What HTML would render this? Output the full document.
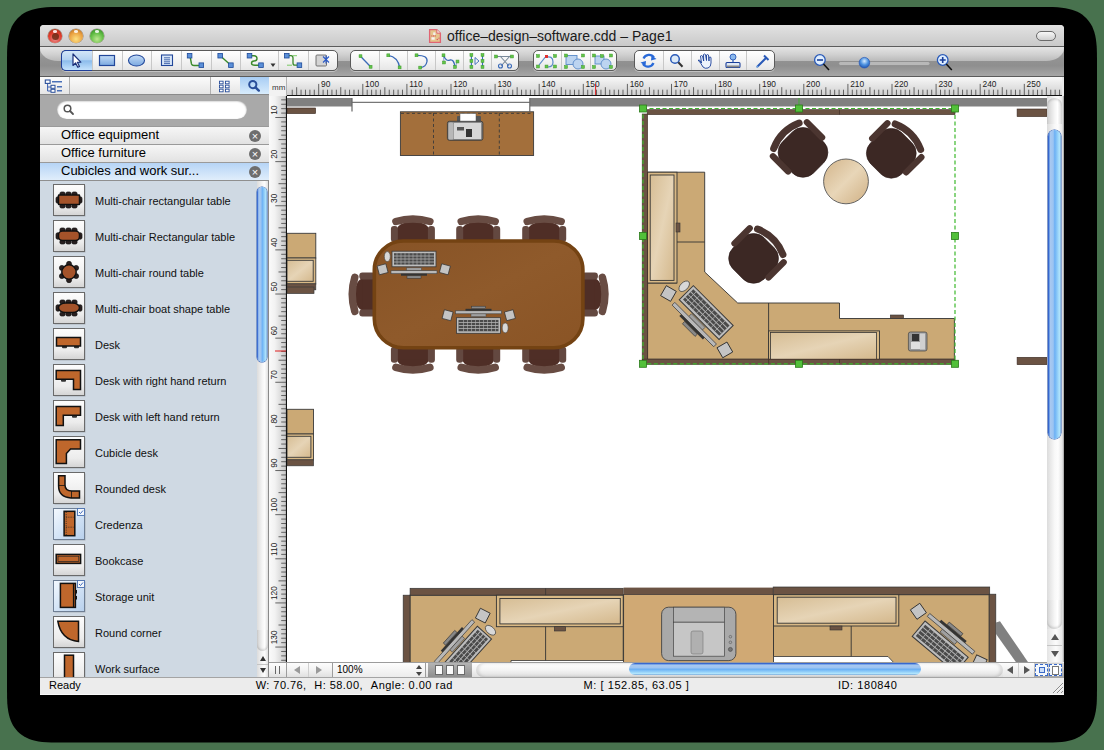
<!DOCTYPE html>
<html><head><meta charset="utf-8">
<style>
*{margin:0;padding:0;box-sizing:border-box}
html,body{width:1104px;height:750px;overflow:hidden;background:#48724e;font-family:"Liberation Sans",sans-serif;position:relative}
div,span,svg{position:absolute}
.t{white-space:nowrap;color:#000}
</style></head><body>

<svg style="left:0;top:0" width="1104" height="750"><path d="M1044.0,7.0 L1052.6,7.1 L1057.6,7.3 L1061.8,7.7 L1065.5,8.2 L1068.9,8.9 L1071.9,9.7 L1074.8,10.7 L1077.4,11.8 L1079.8,13.1 L1082.1,14.6 L1084.1,16.2 L1086.1,17.9 L1087.8,19.9 L1089.4,21.9 L1090.9,24.2 L1092.2,26.6 L1093.3,29.2 L1094.3,32.1 L1095.1,35.1 L1095.8,38.5 L1096.3,42.2 L1096.7,46.4 L1096.9,51.4 L1097.0,60.0 L1097.0,689.6 L1096.9,698.2 L1096.7,703.2 L1096.3,707.4 L1095.8,711.1 L1095.1,714.5 L1094.3,717.5 L1093.3,720.4 L1092.2,723.0 L1090.9,725.4 L1089.4,727.7 L1087.8,729.7 L1086.1,731.7 L1084.1,733.4 L1082.1,735.0 L1079.8,736.5 L1077.4,737.8 L1074.8,738.9 L1071.9,739.9 L1068.9,740.7 L1065.5,741.4 L1061.8,741.9 L1057.6,742.3 L1052.6,742.5 L1044.0,742.6 L60.0,742.6 L51.4,742.5 L46.4,742.3 L42.2,741.9 L38.5,741.4 L35.1,740.7 L32.1,739.9 L29.2,738.9 L26.6,737.8 L24.2,736.5 L21.9,735.0 L19.9,733.4 L17.9,731.7 L16.2,729.7 L14.6,727.7 L13.1,725.4 L11.8,723.0 L10.7,720.4 L9.7,717.5 L8.9,714.5 L8.2,711.1 L7.7,707.4 L7.3,703.2 L7.1,698.2 L7.0,689.6 L7.0,60.0 L7.1,51.4 L7.3,46.4 L7.7,42.2 L8.2,38.5 L8.9,35.1 L9.7,32.1 L10.7,29.2 L11.8,26.6 L13.1,24.2 L14.6,21.9 L16.2,19.9 L17.9,17.9 L19.9,16.2 L21.9,14.6 L24.2,13.1 L26.6,11.8 L29.2,10.7 L32.1,9.7 L35.1,8.9 L38.5,8.2 L42.2,7.7 L46.4,7.3 L51.4,7.1 L60.0,7.0Z" fill="#000"/></svg>
<div style="left:40px;top:25px;width:1024px;height:669px;background:#e9e9e9;border-radius:4px 4px 0 0;overflow:hidden"></div>
<div style="left:40px;top:25px;width:1024px;height:21px;background:linear-gradient(#e2e2e2,#c9c9c9);border-radius:4px 4px 0 0"></div>
<div style="left:40px;top:46px;width:1024px;height:1px;background:#5c5c5c"></div>
<div style="left:48px;top:29px;width:14px;height:14px;border-radius:50%;background:radial-gradient(circle at 50% 72%,#e89090 0%,#e03828 55%,#8a3a18 100%);box-shadow:0 0 0 0.6px rgba(60,40,20,.45), 0 1px 1px rgba(255,255,255,.5)"></div>
<div style="left:53px;top:30px;width:4px;height:2.5px;border-radius:50%;background:rgba(255,255,255,.85)"></div>
<div style="left:69px;top:29px;width:14px;height:14px;border-radius:50%;background:radial-gradient(circle at 50% 72%,#fce080 0%,#eaa040 55%,#a8601a 100%);box-shadow:0 0 0 0.6px rgba(60,40,20,.45), 0 1px 1px rgba(255,255,255,.5)"></div>
<div style="left:74px;top:30px;width:4px;height:2.5px;border-radius:50%;background:rgba(255,255,255,.85)"></div>
<div style="left:90px;top:29px;width:14px;height:14px;border-radius:50%;background:radial-gradient(circle at 50% 72%,#bce890 0%,#5cba40 55%,#2a7a22 100%);box-shadow:0 0 0 0.6px rgba(60,40,20,.45), 0 1px 1px rgba(255,255,255,.5)"></div>
<div style="left:95px;top:30px;width:4px;height:2.5px;border-radius:50%;background:rgba(255,255,255,.85)"></div>
<div style="left:51.5px;top:32.5px;width:7px;height:7px;border-radius:50%;background:#6e2a14;opacity:.85"></div>
<svg style="left:428px;top:28px" width="16" height="16"><path d="M1.6,1.6 H8.8 L12.4,5.2 V14.4 H1.6 Z" fill="#e4c48c" stroke="#e06472" stroke-width="1.3"/><path d="M8.8,1.6 V5.2 H12.4" fill="#f0e8d8" stroke="#e06472" stroke-width="1"/><rect x="5.2" y="4.4" width="2.2" height="2.6" fill="#f4f0f0"/><rect x="3.5" y="9.3" width="3.2" height="2.4" fill="#f8f4f4"/><circle cx="3.8" cy="7.9" r=".6" fill="#e05060"/><circle cx="5.5" cy="7.9" r=".6" fill="#e05060"/><circle cx="7.3" cy="7.9" r=".6" fill="#e05060"/><circle cx="9.3" cy="11.5" r=".7" fill="#e05060"/><circle cx="11" cy="10.2" r=".6" fill="#e05060"/></svg>
<div class="t" style="left:447px;top:28px;font-size:14px;line-height:17px;letter-spacing:0px;color:#1a1a1a">office&#8211;design&#8211;software.cdd &#8211; Page1</div>
<div style="left:1036px;top:31px;width:20px;height:10px;border-radius:5px;background:linear-gradient(#f8f8f8,#d0d0d0);border:1px solid #6a6a6a"></div>
<div style="left:40px;top:47px;width:1024px;height:29px;background:linear-gradient(#b4b4b4 0%,#939393 40%,#8f8f8f 65%,#a6a6a6 100%)"></div>
<div style="left:40px;top:47px;width:1024px;height:14px;border-radius:0 0 18px 18px / 0 0 13px 13px;background:linear-gradient(#e4e4e4,#d2d2d2 50%,#bababa)"></div>
<div style="left:40px;top:76px;width:1024px;height:1px;background:#5a5a5a"></div>
<div style="left:61px;top:50px;width:277px;height:21px;border-radius:5px;background:linear-gradient(#ffffff 0%,#f4f4f4 50%,#e6e6e6 100%);border:1px solid #5a5a5a;box-shadow:0 1px 0 rgba(255,255,255,.4)"></div>
<div style="left:92px;top:51px;width:1px;height:19px;background:#c8c8c8"></div>
<div style="left:122px;top:51px;width:1px;height:19px;background:#c8c8c8"></div>
<div style="left:151px;top:51px;width:1px;height:19px;background:#c8c8c8"></div>
<div style="left:181px;top:51px;width:1px;height:19px;background:#c8c8c8"></div>
<div style="left:211px;top:51px;width:1px;height:19px;background:#c8c8c8"></div>
<div style="left:240px;top:51px;width:1px;height:19px;background:#c8c8c8"></div>
<div style="left:278px;top:51px;width:1px;height:19px;background:#c8c8c8"></div>
<div style="left:308px;top:51px;width:1px;height:19px;background:#c8c8c8"></div>
<div style="left:61px;top:50px;width:31px;height:21px;border-radius:5px 0 0 5px;background:linear-gradient(#d4e6f8,#b4d2f2 45%,#8cbcec 52%,#c4e2fc);border:1px solid #1f3f9a;border-right:none"></div>
<div style="left:350px;top:50px;width:169px;height:21px;border-radius:5px;background:linear-gradient(#ffffff 0%,#f4f4f4 50%,#e6e6e6 100%);border:1px solid #5a5a5a;box-shadow:0 1px 0 rgba(255,255,255,.4)"></div>
<div style="left:379px;top:51px;width:1px;height:19px;background:#c8c8c8"></div>
<div style="left:407px;top:51px;width:1px;height:19px;background:#c8c8c8"></div>
<div style="left:435px;top:51px;width:1px;height:19px;background:#c8c8c8"></div>
<div style="left:463px;top:51px;width:1px;height:19px;background:#c8c8c8"></div>
<div style="left:491px;top:51px;width:1px;height:19px;background:#c8c8c8"></div>
<div style="left:533px;top:50px;width:84px;height:21px;border-radius:5px;background:linear-gradient(#ffffff 0%,#f4f4f4 50%,#e6e6e6 100%);border:1px solid #5a5a5a;box-shadow:0 1px 0 rgba(255,255,255,.4)"></div>
<div style="left:561px;top:51px;width:1px;height:19px;background:#c8c8c8"></div>
<div style="left:590px;top:51px;width:1px;height:19px;background:#c8c8c8"></div>
<div style="left:634px;top:50px;width:141px;height:21px;border-radius:5px;background:linear-gradient(#ffffff 0%,#f4f4f4 50%,#e6e6e6 100%);border:1px solid #5a5a5a;box-shadow:0 1px 0 rgba(255,255,255,.4)"></div>
<div style="left:663px;top:51px;width:1px;height:19px;background:#c8c8c8"></div>
<div style="left:691px;top:51px;width:1px;height:19px;background:#c8c8c8"></div>
<div style="left:719px;top:51px;width:1px;height:19px;background:#c8c8c8"></div>
<div style="left:746px;top:51px;width:1px;height:19px;background:#c8c8c8"></div>
<div style="left:40px;top:77px;width:229px;height:18px;background:linear-gradient(#fbfbfb,#e4e4e4)"></div>
<div style="left:69px;top:77px;width:1px;height:17px;background:#b0b0b0"></div>
<div style="left:210px;top:77px;width:1px;height:17px;background:#b0b0b0"></div>
<div style="left:240px;top:77px;width:29px;height:17px;background:linear-gradient(#a8cdf4,#d8ecfc)"></div>
<div style="left:40px;top:94px;width:229px;height:1px;background:#8a8a8a"></div>
<div style="left:40px;top:95px;width:229px;height:31px;background:#a9a9a9"></div>
<div style="left:57px;top:100px;width:190px;height:19px;border-radius:10px;background:#fff;box-shadow:inset 0 1px 2px rgba(0,0,0,.45)"></div>
<div style="left:40px;top:126px;width:229px;height:18px;background:linear-gradient(#f6f6f6,#e2e2e2);border-top:1px solid #9a9a9a"></div>
<div class="t" style="left:61px;top:127px;font-size:13px;line-height:16px">Office equipment</div>
<div style="left:249px;top:130px;width:12px;height:12px;border-radius:50%;background:#6e6e6e;color:#fff;font-size:11px;line-height:12px;text-align:center">&#215;</div>
<div style="left:40px;top:144px;width:229px;height:18px;background:linear-gradient(#f6f6f6,#e2e2e2);border-top:1px solid #9a9a9a"></div>
<div class="t" style="left:61px;top:145px;font-size:13px;line-height:16px">Office furniture</div>
<div style="left:249px;top:148px;width:12px;height:12px;border-radius:50%;background:#6e6e6e;color:#fff;font-size:11px;line-height:12px;text-align:center">&#215;</div>
<div style="left:40px;top:162px;width:229px;height:18px;background:linear-gradient(#b6d4f6,#e0eefb);border-top:1px solid #9a9a9a"></div>
<div class="t" style="left:61px;top:163px;font-size:13px;line-height:16px">Cubicles and work sur...</div>
<div style="left:249px;top:166px;width:12px;height:12px;border-radius:50%;background:#6e6e6e;color:#fff;font-size:11px;line-height:12px;text-align:center">&#215;</div>
<div style="left:40px;top:180px;width:229px;height:1px;background:#8f8f8f"></div>
<div style="left:40px;top:181px;width:217px;height:496px;background:#cfd9e3"></div>
<div class="t" style="left:95px;top:194px;font-size:11px;line-height:14px;color:#101010">Multi-chair rectangular table</div>
<div class="t" style="left:95px;top:230px;font-size:11px;line-height:14px;color:#101010">Multi-chair Rectangular table</div>
<div class="t" style="left:95px;top:266px;font-size:11px;line-height:14px;color:#101010">Multi-chair round table</div>
<div class="t" style="left:95px;top:302px;font-size:11px;line-height:14px;color:#101010">Multi-chair boat shape table</div>
<div class="t" style="left:95px;top:338px;font-size:11px;line-height:14px;color:#101010">Desk</div>
<div class="t" style="left:95px;top:374px;font-size:11px;line-height:14px;color:#101010">Desk with right hand return</div>
<div class="t" style="left:95px;top:410px;font-size:11px;line-height:14px;color:#101010">Desk with left hand return</div>
<div class="t" style="left:95px;top:446px;font-size:11px;line-height:14px;color:#101010">Cubicle desk</div>
<div class="t" style="left:95px;top:482px;font-size:11px;line-height:14px;color:#101010">Rounded desk</div>
<div class="t" style="left:95px;top:518px;font-size:11px;line-height:14px;color:#101010">Credenza</div>
<div class="t" style="left:95px;top:554px;font-size:11px;line-height:14px;color:#101010">Bookcase</div>
<div class="t" style="left:95px;top:590px;font-size:11px;line-height:14px;color:#101010">Storage unit</div>
<div class="t" style="left:95px;top:626px;font-size:11px;line-height:14px;color:#101010">Round corner</div>
<div class="t" style="left:95px;top:662px;font-size:11px;line-height:14px;color:#101010">Work surface</div>
<svg style="left:0;top:0" width="1104" height="750" viewBox="0 0 1104 750">
<defs>
<linearGradient id="ib" x1="0" y1="0" x2="0" y2="1"><stop offset="0" stop-color="#fdfdfd"/><stop offset=".7" stop-color="#ececec"/><stop offset="1" stop-color="#d4d4d4"/></linearGradient>
<linearGradient id="ibs" x1="0" y1="0" x2="1" y2="1"><stop offset="0" stop-color="#f4f9fe"/><stop offset=".5" stop-color="#d4e4f6"/><stop offset="1" stop-color="#b8d0ec"/></linearGradient>
</defs>
<rect x="54.5" y="185.5" width="31" height="31" fill="rgba(0,0,0,.18)"/>
<rect x="53.5" y="184.5" width="31" height="31" fill="url(#ib)" stroke="#6a6a6a" stroke-width="1"/>
<g transform="translate(53,184)">
<rect x="6.9" y="8" width="5.2" height="3.8" rx="1.6" fill="#2a2020" stroke="#111" stroke-width=".7"/>
<rect x="6.9" y="20.2" width="5.2" height="3.8" rx="1.6" fill="#2a2020" stroke="#111" stroke-width=".7"/>
<rect x="12.9" y="8" width="5.2" height="3.8" rx="1.6" fill="#2a2020" stroke="#111" stroke-width=".7"/>
<rect x="12.9" y="20.2" width="5.2" height="3.8" rx="1.6" fill="#2a2020" stroke="#111" stroke-width=".7"/>
<rect x="18.9" y="8" width="5.2" height="3.8" rx="1.6" fill="#2a2020" stroke="#111" stroke-width=".7"/>
<rect x="18.9" y="20.2" width="5.2" height="3.8" rx="1.6" fill="#2a2020" stroke="#111" stroke-width=".7"/>
<rect x="3" y="12.8" width="3.8" height="6.4" rx="1.6" fill="#2a2020" stroke="#111" stroke-width=".7"/>
<rect x="25.2" y="12.8" width="3.8" height="6.4" rx="1.6" fill="#2a2020" stroke="#111" stroke-width=".7"/>
<rect x="5.5" y="11" width="21" height="9.6" rx="0.5" fill="#a4532a" stroke="#111" stroke-width="1.5"/>
</g>
<rect x="54.5" y="221.5" width="31" height="31" fill="rgba(0,0,0,.18)"/>
<rect x="53.5" y="220.5" width="31" height="31" fill="url(#ib)" stroke="#6a6a6a" stroke-width="1"/>
<g transform="translate(53,220)">
<rect x="6.9" y="8" width="5.2" height="3.8" rx="1.6" fill="#2a2020" stroke="#111" stroke-width=".7"/>
<rect x="6.9" y="20.2" width="5.2" height="3.8" rx="1.6" fill="#2a2020" stroke="#111" stroke-width=".7"/>
<rect x="12.9" y="8" width="5.2" height="3.8" rx="1.6" fill="#2a2020" stroke="#111" stroke-width=".7"/>
<rect x="12.9" y="20.2" width="5.2" height="3.8" rx="1.6" fill="#2a2020" stroke="#111" stroke-width=".7"/>
<rect x="18.9" y="8" width="5.2" height="3.8" rx="1.6" fill="#2a2020" stroke="#111" stroke-width=".7"/>
<rect x="18.9" y="20.2" width="5.2" height="3.8" rx="1.6" fill="#2a2020" stroke="#111" stroke-width=".7"/>
<rect x="3" y="12.8" width="3.8" height="6.4" rx="1.6" fill="#2a2020" stroke="#111" stroke-width=".7"/>
<rect x="25.2" y="12.8" width="3.8" height="6.4" rx="1.6" fill="#2a2020" stroke="#111" stroke-width=".7"/>
<rect x="5.5" y="11" width="21" height="9.6" rx="4" fill="#a4532a" stroke="#111" stroke-width="1.5"/>
</g>
<rect x="54.5" y="257.5" width="31" height="31" fill="rgba(0,0,0,.18)"/>
<rect x="53.5" y="256.5" width="31" height="31" fill="url(#ib)" stroke="#6a6a6a" stroke-width="1"/>
<g transform="translate(53,256)">
<circle cx="23.1" cy="20.1" r="2.5" fill="#2a2020" stroke="#111" stroke-width=".7"/>
<circle cx="16.0" cy="24.2" r="2.5" fill="#2a2020" stroke="#111" stroke-width=".7"/>
<circle cx="8.9" cy="20.1" r="2.5" fill="#2a2020" stroke="#111" stroke-width=".7"/>
<circle cx="8.9" cy="11.9" r="2.5" fill="#2a2020" stroke="#111" stroke-width=".7"/>
<circle cx="16.0" cy="7.8" r="2.5" fill="#2a2020" stroke="#111" stroke-width=".7"/>
<circle cx="23.1" cy="11.9" r="2.5" fill="#2a2020" stroke="#111" stroke-width=".7"/>
<circle cx="16" cy="16" r="7.2" fill="#a4532a" stroke="#111" stroke-width="1.5"/>
</g>
<rect x="54.5" y="293.5" width="31" height="31" fill="rgba(0,0,0,.18)"/>
<rect x="53.5" y="292.5" width="31" height="31" fill="url(#ib)" stroke="#6a6a6a" stroke-width="1"/>
<g transform="translate(53,292)">
<rect x="6.9" y="8" width="5.2" height="3.8" rx="1.6" fill="#2a2020" stroke="#111" stroke-width=".7"/>
<rect x="6.9" y="20.2" width="5.2" height="3.8" rx="1.6" fill="#2a2020" stroke="#111" stroke-width=".7"/>
<rect x="12.9" y="8" width="5.2" height="3.8" rx="1.6" fill="#2a2020" stroke="#111" stroke-width=".7"/>
<rect x="12.9" y="20.2" width="5.2" height="3.8" rx="1.6" fill="#2a2020" stroke="#111" stroke-width=".7"/>
<rect x="18.9" y="8" width="5.2" height="3.8" rx="1.6" fill="#2a2020" stroke="#111" stroke-width=".7"/>
<rect x="18.9" y="20.2" width="5.2" height="3.8" rx="1.6" fill="#2a2020" stroke="#111" stroke-width=".7"/>
<rect x="3" y="12.8" width="3.8" height="6.4" rx="1.6" fill="#2a2020" stroke="#111" stroke-width=".7"/>
<rect x="25.2" y="12.8" width="3.8" height="6.4" rx="1.6" fill="#2a2020" stroke="#111" stroke-width=".7"/>
<rect x="5.5" y="11" width="21" height="9.6" rx="7" fill="#a4532a" stroke="#111" stroke-width="1.5"/>
</g>
<rect x="54.5" y="329.5" width="31" height="31" fill="rgba(0,0,0,.18)"/>
<rect x="53.5" y="328.5" width="31" height="31" fill="url(#ib)" stroke="#6a6a6a" stroke-width="1"/>
<g transform="translate(53,328)">
<rect x="9" y="17.5" width="5" height="2.8" rx="1" fill="#333"/><rect x="21" y="17.5" width="5" height="2.8" rx="1" fill="#333"/>
<rect x="3.5" y="9.5" width="24" height="8.5" fill="#bf672c" stroke="#111" stroke-width="1.5"/>
</g>
<rect x="54.5" y="365.5" width="31" height="31" fill="rgba(0,0,0,.18)"/>
<rect x="53.5" y="364.5" width="31" height="31" fill="url(#ib)" stroke="#6a6a6a" stroke-width="1"/>
<g transform="translate(53,364)">
<rect x="8" y="15" width="5" height="2.8" rx="1" fill="#333"/>
<path d="M3.2,6.5 H27.5 V25.5 H20.5 V15.3 H3.2 Z" fill="#bf672c" stroke="#111" stroke-width="1.5"/>
</g>
<rect x="54.5" y="401.5" width="31" height="31" fill="rgba(0,0,0,.18)"/>
<rect x="53.5" y="400.5" width="31" height="31" fill="url(#ib)" stroke="#6a6a6a" stroke-width="1"/>
<g transform="translate(53,400)">
<rect x="19" y="15" width="5" height="2.8" rx="1" fill="#333"/>
<path d="M3.2,6.5 H27.5 V15.3 H10.3 V25.5 H3.2 Z" fill="#bf672c" stroke="#111" stroke-width="1.5"/>
</g>
<rect x="54.5" y="437.5" width="31" height="31" fill="rgba(0,0,0,.18)"/>
<rect x="53.5" y="436.5" width="31" height="31" fill="url(#ib)" stroke="#6a6a6a" stroke-width="1"/>
<g transform="translate(53,436)">
<path d="M3.2,3.8 H27.5 V13 H17.5 L13.4,17.5 V27.5 H3.2 Z" fill="#bf672c" stroke="#111" stroke-width="1.5"/>
</g>
<rect x="54.5" y="473.5" width="31" height="31" fill="rgba(0,0,0,.18)"/>
<rect x="53.5" y="472.5" width="31" height="31" fill="url(#ib)" stroke="#6a6a6a" stroke-width="1"/>
<g transform="translate(53,472)">
<path d="M5.6,3.8 H12 V13 Q12,19 19,19 H26.5 V26 H18 Q5.6,25 5.6,14 Z" fill="#bf672c" stroke="#111" stroke-width="1.5"/>
<path d="M5.6,13.5 H12 M18.5,19 V26" stroke="#111" stroke-width=".8"/>
</g>
<rect x="54.5" y="509.5" width="31" height="31" fill="rgba(0,0,0,.18)"/>
<rect x="53.5" y="508.5" width="31" height="31" fill="url(#ibs)" stroke="#6f7f94" stroke-width="1"/>
<g transform="translate(53,508)">
<rect x="11.1" y="3.3" width="10.7" height="24.4" fill="#bf672c" stroke="#111" stroke-width="1.5"/>
<path d="M13.2,4 V27 M13.2,9.2 H20.5 M13.2,19.2 H20.5" stroke="#222" stroke-width=".8" stroke-dasharray="1,1.2"/>
<rect x="24.5" y="0.5" width="7" height="7" fill="#f4f8fc" stroke="#4a70b0" stroke-width=".9"/><path d="M26,4 L27.5,5.5 L30,2.5" stroke="#2a5ab8" stroke-width=".9" fill="none"/>
</g>
<rect x="54.5" y="545.5" width="31" height="31" fill="rgba(0,0,0,.18)"/>
<rect x="53.5" y="544.5" width="31" height="31" fill="url(#ib)" stroke="#6a6a6a" stroke-width="1"/>
<g transform="translate(53,544)">
<rect x="3.2" y="10.4" width="24.4" height="9" fill="#bf672c" stroke="#111" stroke-width="1.5"/>
<rect x="5" y="12.2" width="20.8" height="5.4" fill="none" stroke="#222" stroke-width=".7"/>
</g>
<rect x="54.5" y="581.5" width="31" height="31" fill="rgba(0,0,0,.18)"/>
<rect x="53.5" y="580.5" width="31" height="31" fill="url(#ibs)" stroke="#6f7f94" stroke-width="1"/>
<g transform="translate(53,580)">
<rect x="7.4" y="3.4" width="15" height="24" fill="#bf672c" stroke="#111" stroke-width="1.5"/>
<path d="M20.5,3.6 V27 M23.4,10 V13.5 M23.4,16 V19.5" stroke="#111" stroke-width="1.2"/>
<rect x="24.5" y="0.5" width="7" height="7" fill="#f4f8fc" stroke="#4a70b0" stroke-width=".9"/><path d="M26,4 L27.5,5.5 L30,2.5" stroke="#2a5ab8" stroke-width=".9" fill="none"/>
</g>
<rect x="54.5" y="617.5" width="31" height="31" fill="rgba(0,0,0,.18)"/>
<rect x="53.5" y="616.5" width="31" height="31" fill="url(#ib)" stroke="#6a6a6a" stroke-width="1"/>
<g transform="translate(53,616)">
<path d="M4.8,5.2 H25.5 V25.5 Q8,24 4.8,5.2 Z" fill="#bf672c" stroke="#111" stroke-width="1.5"/>
</g>
<rect x="54.5" y="653.5" width="31" height="31" fill="rgba(0,0,0,.18)"/>
<rect x="53.5" y="652.5" width="31" height="31" fill="url(#ib)" stroke="#6a6a6a" stroke-width="1"/>
<g transform="translate(53,652)">
<rect x="11.5" y="3.2" width="9" height="32" fill="#bf672c" stroke="#111" stroke-width="1.5"/>
</g>
</svg>
<svg style="left:0;top:0" width="1104" height="750" viewBox="0 0 1104 750">
<defs><linearGradient id="rg1" x1="0" y1="0" x2="0" y2="1"><stop offset="0" stop-color="#f8f8f8"/><stop offset="1" stop-color="#cfcfcf"/></linearGradient><linearGradient id="rg2" x1="0" y1="0" x2="1" y2="0"><stop offset="0" stop-color="#fafafa"/><stop offset=".35" stop-color="#f2f2f2"/><stop offset="1" stop-color="#c8c8c8"/></linearGradient></defs>
<rect x="269" y="77" width="18" height="19" fill="#f2f2f2"/>
<text x="272" y="90" font-family="Liberation Sans" font-size="8" fill="#333">mm</text>
<rect x="287" y="77" width="775" height="18.5" fill="url(#rg1)"/>
<rect x="286" y="77" width="1" height="19" fill="#b4b4b4"/>
<rect x="269" y="96" width="17" height="566" fill="url(#rg2)"/>
<text x="321.0" y="86.6" font-family="Liberation Sans" font-size="8.4" fill="#222">90</text>
<text x="365.1" y="86.6" font-family="Liberation Sans" font-size="8.4" fill="#222">100</text>
<text x="409.2" y="86.6" font-family="Liberation Sans" font-size="8.4" fill="#222">110</text>
<text x="453.3" y="86.6" font-family="Liberation Sans" font-size="8.4" fill="#222">120</text>
<text x="497.4" y="86.6" font-family="Liberation Sans" font-size="8.4" fill="#222">130</text>
<text x="541.5" y="86.6" font-family="Liberation Sans" font-size="8.4" fill="#222">140</text>
<text x="585.6" y="86.6" font-family="Liberation Sans" font-size="8.4" fill="#222">150</text>
<text x="629.7" y="86.6" font-family="Liberation Sans" font-size="8.4" fill="#222">160</text>
<text x="673.8" y="86.6" font-family="Liberation Sans" font-size="8.4" fill="#222">170</text>
<text x="717.9" y="86.6" font-family="Liberation Sans" font-size="8.4" fill="#222">180</text>
<text x="762.0" y="86.6" font-family="Liberation Sans" font-size="8.4" fill="#222">190</text>
<text x="806.1" y="86.6" font-family="Liberation Sans" font-size="8.4" fill="#222">200</text>
<text x="850.2" y="86.6" font-family="Liberation Sans" font-size="8.4" fill="#222">210</text>
<text x="894.3" y="86.6" font-family="Liberation Sans" font-size="8.4" fill="#222">220</text>
<text x="938.4" y="86.6" font-family="Liberation Sans" font-size="8.4" fill="#222">230</text>
<text x="982.5" y="86.6" font-family="Liberation Sans" font-size="8.4" fill="#222">240</text>
<text x="1026.6" y="86.6" font-family="Liberation Sans" font-size="8.4" fill="#222">250</text>
<path d="M292.24,89.7V95M296.65,87.2V95M301.06,89.7V95M305.47,89.7V95M309.88,89.7V95M314.29,89.7V95M318.70,83.9V95M323.11,89.7V95M327.52,89.7V95M331.93,89.7V95M336.34,89.7V95M340.75,87.2V95M345.16,89.7V95M349.57,89.7V95M353.98,89.7V95M358.39,89.7V95M362.80,83.9V95M367.21,89.7V95M371.62,89.7V95M376.03,89.7V95M380.44,89.7V95M384.85,87.2V95M389.26,89.7V95M393.67,89.7V95M398.08,89.7V95M402.49,89.7V95M406.90,83.9V95M411.31,89.7V95M415.72,89.7V95M420.13,89.7V95M424.54,89.7V95M428.95,87.2V95M433.36,89.7V95M437.77,89.7V95M442.18,89.7V95M446.59,89.7V95M451.00,83.9V95M455.41,89.7V95M459.82,89.7V95M464.23,89.7V95M468.64,89.7V95M473.05,87.2V95M477.46,89.7V95M481.87,89.7V95M486.28,89.7V95M490.69,89.7V95M495.10,83.9V95M499.51,89.7V95M503.92,89.7V95M508.33,89.7V95M512.74,89.7V95M517.15,87.2V95M521.56,89.7V95M525.97,89.7V95M530.38,89.7V95M534.79,89.7V95M539.20,83.9V95M543.61,89.7V95M548.02,89.7V95M552.43,89.7V95M556.84,89.7V95M561.25,87.2V95M565.66,89.7V95M570.07,89.7V95M574.48,89.7V95M578.89,89.7V95M583.30,83.9V95M587.71,89.7V95M592.12,89.7V95M596.53,89.7V95M600.94,89.7V95M605.35,87.2V95M609.76,89.7V95M614.17,89.7V95M618.58,89.7V95M622.99,89.7V95M627.40,83.9V95M631.81,89.7V95M636.22,89.7V95M640.63,89.7V95M645.04,89.7V95M649.45,87.2V95M653.86,89.7V95M658.27,89.7V95M662.68,89.7V95M667.09,89.7V95M671.50,83.9V95M675.91,89.7V95M680.32,89.7V95M684.73,89.7V95M689.14,89.7V95M693.55,87.2V95M697.96,89.7V95M702.37,89.7V95M706.78,89.7V95M711.19,89.7V95M715.60,83.9V95M720.01,89.7V95M724.42,89.7V95M728.83,89.7V95M733.24,89.7V95M737.65,87.2V95M742.06,89.7V95M746.47,89.7V95M750.88,89.7V95M755.29,89.7V95M759.70,83.9V95M764.11,89.7V95M768.52,89.7V95M772.93,89.7V95M777.34,89.7V95M781.75,87.2V95M786.16,89.7V95M790.57,89.7V95M794.98,89.7V95M799.39,89.7V95M803.80,83.9V95M808.21,89.7V95M812.62,89.7V95M817.03,89.7V95M821.44,89.7V95M825.85,87.2V95M830.26,89.7V95M834.67,89.7V95M839.08,89.7V95M843.49,89.7V95M847.90,83.9V95M852.31,89.7V95M856.72,89.7V95M861.13,89.7V95M865.54,89.7V95M869.95,87.2V95M874.36,89.7V95M878.77,89.7V95M883.18,89.7V95M887.59,89.7V95M892.00,83.9V95M896.41,89.7V95M900.82,89.7V95M905.23,89.7V95M909.64,89.7V95M914.05,87.2V95M918.46,89.7V95M922.87,89.7V95M927.28,89.7V95M931.69,89.7V95M936.10,83.9V95M940.51,89.7V95M944.92,89.7V95M949.33,89.7V95M953.74,89.7V95M958.15,87.2V95M962.56,89.7V95M966.97,89.7V95M971.38,89.7V95M975.79,89.7V95M980.20,83.9V95M984.61,89.7V95M989.02,89.7V95M993.43,89.7V95M997.84,89.7V95M1002.25,87.2V95M1006.66,89.7V95M1011.07,89.7V95M1015.48,89.7V95M1019.89,89.7V95M1024.30,83.9V95M1028.71,89.7V95M1033.12,89.7V95M1037.53,89.7V95M1041.94,89.7V95M1046.35,87.2V95M1050.76,89.7V95M1055.17,89.7V95M1059.58,89.7V95" stroke="#555" stroke-width=".9"/>
<path d="M287,95.5 H1062" stroke="#111" stroke-width="1.2"/>
<text transform="translate(277.2,114.7) rotate(-90)" font-family="Liberation Sans" font-size="8.4" fill="#222">10</text>
<text transform="translate(277.2,158.8) rotate(-90)" font-family="Liberation Sans" font-size="8.4" fill="#222">20</text>
<text transform="translate(277.2,203.0) rotate(-90)" font-family="Liberation Sans" font-size="8.4" fill="#222">30</text>
<text transform="translate(277.2,247.1) rotate(-90)" font-family="Liberation Sans" font-size="8.4" fill="#222">40</text>
<text transform="translate(277.2,291.2) rotate(-90)" font-family="Liberation Sans" font-size="8.4" fill="#222">50</text>
<text transform="translate(277.2,335.3) rotate(-90)" font-family="Liberation Sans" font-size="8.4" fill="#222">60</text>
<text transform="translate(277.2,379.5) rotate(-90)" font-family="Liberation Sans" font-size="8.4" fill="#222">70</text>
<text transform="translate(277.2,423.6) rotate(-90)" font-family="Liberation Sans" font-size="8.4" fill="#222">80</text>
<text transform="translate(277.2,467.7) rotate(-90)" font-family="Liberation Sans" font-size="8.4" fill="#222">90</text>
<text transform="translate(277.2,511.9) rotate(-90)" font-family="Liberation Sans" font-size="8.4" fill="#222">100</text>
<text transform="translate(277.2,556.0) rotate(-90)" font-family="Liberation Sans" font-size="8.4" fill="#222">110</text>
<text transform="translate(277.2,600.1) rotate(-90)" font-family="Liberation Sans" font-size="8.4" fill="#222">120</text>
<text transform="translate(277.2,644.3) rotate(-90)" font-family="Liberation Sans" font-size="8.4" fill="#222">130</text>
<path d="M281.2,99.85H286M281.2,104.26H286M281.2,108.67H286M281.2,113.09H286M275.3,117.50H286M281.2,121.91H286M281.2,126.33H286M281.2,130.74H286M281.2,135.15H286M278.5,139.56H286M281.2,143.98H286M281.2,148.39H286M281.2,152.80H286M281.2,157.22H286M275.3,161.63H286M281.2,166.04H286M281.2,170.46H286M281.2,174.87H286M281.2,179.28H286M278.5,183.69H286M281.2,188.11H286M281.2,192.52H286M281.2,196.93H286M281.2,201.35H286M275.3,205.76H286M281.2,210.17H286M281.2,214.59H286M281.2,219.00H286M281.2,223.41H286M278.5,227.82H286M281.2,232.24H286M281.2,236.65H286M281.2,241.06H286M281.2,245.48H286M275.3,249.89H286M281.2,254.30H286M281.2,258.72H286M281.2,263.13H286M281.2,267.54H286M278.5,271.96H286M281.2,276.37H286M281.2,280.78H286M281.2,285.19H286M281.2,289.61H286M275.3,294.02H286M281.2,298.43H286M281.2,302.85H286M281.2,307.26H286M281.2,311.67H286M278.5,316.09H286M281.2,320.50H286M281.2,324.91H286M281.2,329.32H286M281.2,333.74H286M275.3,338.15H286M281.2,342.56H286M281.2,346.98H286M281.2,351.39H286M281.2,355.80H286M278.5,360.22H286M281.2,364.63H286M281.2,369.04H286M281.2,373.45H286M281.2,377.87H286M275.3,382.28H286M281.2,386.69H286M281.2,391.11H286M281.2,395.52H286M281.2,399.93H286M278.5,404.35H286M281.2,408.76H286M281.2,413.17H286M281.2,417.58H286M281.2,422.00H286M275.3,426.41H286M281.2,430.82H286M281.2,435.24H286M281.2,439.65H286M281.2,444.06H286M278.5,448.48H286M281.2,452.89H286M281.2,457.30H286M281.2,461.71H286M281.2,466.13H286M275.3,470.54H286M281.2,474.95H286M281.2,479.37H286M281.2,483.78H286M281.2,488.19H286M278.5,492.61H286M281.2,497.02H286M281.2,501.43H286M281.2,505.84H286M281.2,510.26H286M275.3,514.67H286M281.2,519.08H286M281.2,523.50H286M281.2,527.91H286M281.2,532.32H286M278.5,536.74H286M281.2,541.15H286M281.2,545.56H286M281.2,549.97H286M281.2,554.39H286M275.3,558.80H286M281.2,563.21H286M281.2,567.63H286M281.2,572.04H286M281.2,576.45H286M278.5,580.87H286M281.2,585.28H286M281.2,589.69H286M281.2,594.10H286M281.2,598.52H286M275.3,602.93H286M281.2,607.34H286M281.2,611.76H286M281.2,616.17H286M281.2,620.58H286M278.5,625.00H286M281.2,629.41H286M281.2,633.82H286M281.2,638.23H286M281.2,642.65H286M275.3,647.06H286M281.2,651.47H286M281.2,655.89H286M281.2,660.30H286" stroke="#555" stroke-width=".9"/>
<path d="M286.5,96 V662" stroke="#111" stroke-width="1.2"/>
<path d="M595.6,84 V95" stroke="#e02020" stroke-width="1"/>
<path d="M275,351 H286" stroke="#e02020" stroke-width="1"/>
</svg>
<div style="left:287px;top:96px;width:760px;height:566px;background:#fff"></div>
<svg style="left:0;top:0" width="1104" height="750" viewBox="0 0 1104 750">
<defs>
<clipPath id="cvc"><rect x="287" y="96" width="760" height="566"/></clipPath>
<linearGradient id="lp" x1="0" y1="0" x2="1" y2="1"><stop offset="0" stop-color="#d6bd94"/><stop offset=".5" stop-color="#e6d4b6"/><stop offset="1" stop-color="#d4b88c"/></linearGradient>
<linearGradient id="tbl" x1="0" y1="0" x2="1" y2="1"><stop offset="0" stop-color="#875326"/><stop offset=".5" stop-color="#8f5a2b"/><stop offset="1" stop-color="#8a5425"/></linearGradient>
<linearGradient id="rt" x1="0" y1="0" x2="1" y2="1"><stop offset="0" stop-color="#d2b48a"/><stop offset=".5" stop-color="#e8d6b8"/><stop offset="1" stop-color="#d0b084"/></linearGradient>
<g id="cchair">
 <rect x="-16" y="-7.2" width="32" height="20" rx="14" ry="8" fill="#4f2e26"/>
 <rect x="-16" y="0" width="32" height="14" fill="#4f2e26"/>
 <rect x="-22" y="-3" width="7" height="16" rx="3" fill="#634840"/>
 <rect x="15" y="-3" width="7" height="16" rx="3" fill="#634840"/>
 <path d="M-17,-7.5 Q0,-12.7 17,-7.5" stroke="#684c43" stroke-width="7.5" fill="none" stroke-linecap="round"/>
</g>
<g id="ochair">
 <rect x="-22" y="-22" width="44" height="44" rx="15" fill="#3c2824" stroke="#2a1a18" stroke-width=".6"/>
 <path d="M-18,-23.5 Q0,-31.5 18,-23.5" stroke="#4b3530" stroke-width="7" fill="none" stroke-linecap="round"/>
 <line x1="-24" y1="-18.5" x2="-24" y2="3" stroke="#4b3530" stroke-width="6.3" stroke-linecap="round"/>
 <line x1="24" y1="-18.5" x2="24" y2="3" stroke="#4b3530" stroke-width="6.3" stroke-linecap="round"/>
</g>
<g id="kb">
 <rect x="-22" y="-7.8" width="44" height="15.6" fill="#bdbdbd" stroke="#3a3a3a" stroke-width=".8"/>
 <rect x="-20" y="-5.8" width="40" height="11.4" fill="#4a4a4a"/>
 <path d="M-20,-3 H20 M-20,0 H20 M-20,3 H20" stroke="#b4b4b4" stroke-width=".8"/>
 <path d="M-17,-6 V6 M-13,-6 V6 M-9,-6 V6 M-5,-6 V6 M-1,-6 V6 M3,-6 V6 M7,-6 V6 M11,-6 V6 M15,-6 V6" stroke="#b0b0b0" stroke-width=".6"/>
 <rect x="-7.5" y="8.8" width="15" height="3" fill="#a0a0a0" stroke="#444" stroke-width=".5"/>
 <rect x="-23" y="11.7" width="46" height="3" fill="#b8b8b8" stroke="#444" stroke-width=".6"/>
 <rect x="-13" y="14.7" width="26" height="2" fill="#333"/>
 <rect x="-7" y="16.8" width="14" height="2.5" fill="#888" stroke="#333" stroke-width=".5"/>
 <ellipse cx="-26.7" cy="-2.4" rx="3" ry="5" fill="#d8d8d8" stroke="#444" stroke-width=".6"/>
 <g transform="translate(-31.4,10.3) rotate(-15)"><rect x="-4.5" y="-4.5" width="9" height="9" fill="#c4c4c4" stroke="#333" stroke-width=".7"/></g>
 <g transform="translate(30.9,10.3) rotate(15)"><rect x="-4.5" y="-4.5" width="9" height="9" fill="#c4c4c4" stroke="#333" stroke-width=".7"/></g>
</g>
<g id="tchair">
 <use href="#cchair"/>
</g>
</defs>
<g clip-path="url(#cvc)">
<rect x="287" y="98" width="65" height="8.5" fill="#808080"/>
<rect x="530" y="98" width="517" height="8.5" fill="#808080"/>
<path d="M352,102.3 H530" stroke="#555" stroke-width="1" fill="none"/>
<path d="M352,98 V111.5 M529.8,98 V111.5" stroke="#666" stroke-width="1.2"/>
<rect x="287" y="108" width="28.6" height="5.6" fill="#6b5343" stroke="#3a2a22" stroke-width=".6"/>
<rect x="1017.1" y="109" width="30" height="7.6" fill="#6b5343" stroke="#3a2a22" stroke-width=".6"/>
<rect x="1017.1" y="357.3" width="30" height="7.4" fill="#6b5343" stroke="#3a2a22" stroke-width=".6"/>
<rect x="400.4" y="111.8" width="133.2" height="43.7" fill="#a36f3b" stroke="#3a3a3a" stroke-width=".9"/>
<path d="M401,113.4 H533 M433.5,113 V155 M499.3,113 V155" stroke="#3a3a3a" stroke-width=".9" stroke-dasharray="3,2.5" fill="none"/>
<rect x="457" y="116" width="24" height="6" fill="#555" rx="1"/>
<rect x="460" y="113.5" width="16" height="8.5" fill="#fff" stroke="#555" stroke-width=".5"/>
<rect x="447.4" y="121.3" width="35.5" height="19" rx="2" fill="#8a8a8a" stroke="#333" stroke-width=".8"/>
<rect x="454" y="123" width="27" height="16" fill="#d6d6d6"/>
<rect x="448.5" y="122.5" width="5" height="17" rx="1.5" fill="#b8b8b8"/>
<rect x="466" y="129" width="6" height="8" fill="#333"/>
<rect x="457" y="127" width="7" height="3.5" fill="#555"/>
<rect x="287" y="233.3" width="28.8" height="24.7" fill="#cba975" stroke="#3a3a3a" stroke-width=".9"/>
<rect x="287" y="258.0" width="28.8" height="26" fill="#d9b985" stroke="#3a3a3a" stroke-width=".9"/>
<rect x="287" y="260.3" width="26.2" height="21" fill="url(#lp)" stroke="#3a3a3a" stroke-width=".9"/>
<rect x="287" y="283.8" width="28.8" height="6" fill="#6b5343" stroke="#3a3a3a" stroke-width=".7"/>
<rect x="287" y="409.3" width="26.5" height="24.7" fill="#cba975" stroke="#3a3a3a" stroke-width=".9"/>
<rect x="287" y="434.0" width="26.5" height="26" fill="#d9b985" stroke="#3a3a3a" stroke-width=".9"/>
<rect x="287" y="436.3" width="23.9" height="21" fill="url(#lp)" stroke="#3a3a3a" stroke-width=".9"/>
<rect x="287" y="459.8" width="26.5" height="6" fill="#6b5343" stroke="#3a3a3a" stroke-width=".7"/>
<rect x="287" y="287" width="27" height="6.5" fill="#6b5343" stroke="#3a3a3a" stroke-width=".7"/>
<use href="#cchair" transform="translate(412.9,229)"/>
<use href="#cchair" transform="translate(412.9,359.8) rotate(180)"/>
<use href="#cchair" transform="translate(478.2,229)"/>
<use href="#cchair" transform="translate(478.2,359.8) rotate(180)"/>
<use href="#cchair" transform="translate(544.2,229)"/>
<use href="#cchair" transform="translate(544.2,359.8) rotate(180)"/>
<use href="#cchair" transform="translate(362.3,294.4) rotate(-90)"/>
<use href="#cchair" transform="translate(594.9,294.4) rotate(90)"/>
<rect x="374.3" y="241" width="208.6" height="106.8" rx="29" fill="url(#tbl)" stroke="#744313" stroke-width="3.6"/>
<use href="#kb" transform="translate(414,259)"/>
<use href="#kb" transform="translate(478.5,325.5) rotate(180)"/>
<polygon points="647.6,172.2 704.7,172.2 704.7,272 737.7,303 839.5,303 839.5,318.5 954.4,318.5 954.4,359.2 647.6,359.2" fill="#cba975" stroke="#333" stroke-width=".9"/>
<path d="M768.6,303 V359 M677,242 H704.7 M647.6,283 H677" stroke="#333" stroke-width=".9" fill="none"/>
<rect x="647.6" y="172.2" width="29.4" height="110.8" fill="#d9b985" stroke="#333" stroke-width=".9"/>
<rect x="650.2" y="175" width="23.8" height="105.4" fill="url(#lp)" stroke="#333" stroke-width=".9"/>
<rect x="676" y="223" width="4" height="9" fill="#6b5343" stroke="#333" stroke-width=".6"/>
<rect x="768.6" y="330.9" width="110.9" height="28.4" fill="#d9b985" stroke="#333" stroke-width=".9"/>
<rect x="770.6" y="332.5" width="106" height="26.8" fill="url(#lp)" stroke="#333" stroke-width=".8"/>
<rect x="890.3" y="315" width="13.3" height="3.5" fill="#6b5343" stroke="#333" stroke-width=".6"/>
<rect x="908.4" y="332" width="18.6" height="19" rx="2" fill="#9a9a9a" stroke="#444" stroke-width=".7"/>
<rect x="912" y="334" width="7" height="7" fill="#333"/>
<rect x="911" y="342" width="10" height="7" fill="#e0e0e0"/>
<rect x="920" y="333.5" width="5" height="16" fill="#d0d0d0"/>
<rect x="647.2" y="109.7" width="307.8" height="4.9" fill="#6b5343" stroke="#3a2a22" stroke-width=".6"/>
<path d="M839.5,109.7 V114.6" stroke="#3a2a22" stroke-width=".6"/>
<rect x="642.2" y="114" width="5.4" height="245.2" fill="#6b5343" stroke="#3a2a22" stroke-width=".6"/>
<rect x="642.2" y="359.2" width="312.8" height="5.2" fill="#6b5343" stroke="#3a2a22" stroke-width=".6"/>
<path d="M768.6,359.2 V364.4 M839.5,359.2 V364.4" stroke="#3a2a22" stroke-width=".6"/>
<use href="#ochair" transform="translate(803,152.4) rotate(-45)"/>
<use href="#ochair" transform="translate(891.3,153.3) rotate(45)"/>
<use href="#ochair" transform="translate(753.6,258.4) rotate(45)"/>
<circle cx="846" cy="181.4" r="22.4" fill="url(#rt)" stroke="#555" stroke-width=".9"/>
<use href="#kb" transform="translate(706.2,312.6) rotate(45) scale(1.28)"/>
<rect x="643" y="108.5" width="312" height="255.3" fill="none" stroke="#3cb82c" stroke-width="1.2" stroke-dasharray="4,2.5"/>
<path d="M799,98 V108.5" stroke="#3cb030" stroke-width="1"/>
<rect x="639.5" y="105.0" width="7" height="7" fill="#52c03a" stroke="#2a7a1a" stroke-width=".8"/>
<rect x="795.5" y="105.0" width="7" height="7" fill="#52c03a" stroke="#2a7a1a" stroke-width=".8"/>
<rect x="951.5" y="105.0" width="7" height="7" fill="#52c03a" stroke="#2a7a1a" stroke-width=".8"/>
<rect x="639.5" y="232.5" width="7" height="7" fill="#52c03a" stroke="#2a7a1a" stroke-width=".8"/>
<rect x="951.5" y="232.5" width="7" height="7" fill="#52c03a" stroke="#2a7a1a" stroke-width=".8"/>
<rect x="639.5" y="360.3" width="7" height="7" fill="#52c03a" stroke="#2a7a1a" stroke-width=".8"/>
<rect x="795.5" y="360.3" width="7" height="7" fill="#52c03a" stroke="#2a7a1a" stroke-width=".8"/>
<rect x="951.5" y="360.3" width="7" height="7" fill="#52c03a" stroke="#2a7a1a" stroke-width=".8"/>
<rect x="410" y="595.2" width="213.2" height="70" fill="#cba975" stroke="#333" stroke-width=".9"/>
<rect x="410.1" y="588.3" width="213.1" height="6.9" fill="#6b5343" stroke="#333" stroke-width=".7"/>
<path d="M545.6,588.3 V595.2" stroke="#333" stroke-width=".7"/>
<rect x="403.2" y="595.2" width="6.8" height="70" fill="#6b5343" stroke="#333" stroke-width=".7"/>
<rect x="496.4" y="595.2" width="126.8" height="31.5" fill="#d9b985" stroke="#333" stroke-width=".9"/>
<rect x="499.9" y="598.5" width="120.4" height="25.4" fill="url(#lp)" stroke="#333" stroke-width=".9"/>
<path d="M545.6,626.7 V665" stroke="#333" stroke-width=".9"/>
<rect x="554.3" y="626.7" width="11.3" height="4.3" fill="#6b5343" stroke="#333" stroke-width=".6"/>
<polygon points="511,660.5 652,660.5 657,665 511,665" fill="#fff" stroke="#333" stroke-width=".8"/>
<use href="#kb" transform="translate(466.5,652.5) rotate(132) scale(1.22)"/>
<rect x="623.6" y="594.5" width="149.9" height="70" fill="#d0a974" stroke="#333" stroke-width=".9"/>
<rect x="623.6" y="587.6" width="149.9" height="6.9" fill="#6b5343"/>
<rect x="661.6" y="607.2" width="74.3" height="53.4" rx="7" fill="#a9a9a9" stroke="#444" stroke-width=".9"/>
<rect x="673.5" y="607.2" width="51" height="15" fill="#b4b4b4" stroke="#444" stroke-width=".7"/>
<rect x="673.5" y="622.2" width="51" height="34" fill="#c6c6c6" stroke="#444" stroke-width=".7"/>
<rect x="691" y="631" width="12" height="23" rx="2" fill="#b0b0b0" stroke="#777" stroke-width=".6"/>
<circle cx="730.4" cy="636.7" r="1.3" fill="none" stroke="#555" stroke-width=".6"/><circle cx="730.4" cy="642.3" r="1.3" fill="none" stroke="#555" stroke-width=".6"/><circle cx="730.4" cy="649.4" r="2" fill="#777" stroke="#444" stroke-width=".6"/>
<rect x="773.5" y="594.7" width="215.7" height="70" fill="#cba975" stroke="#333" stroke-width=".9"/>
<rect x="773.2" y="587" width="216.5" height="7.7" fill="#6b5343" stroke="#333" stroke-width=".7"/>
<rect x="989.2" y="594.2" width="6.6" height="70" fill="#6b5343" stroke="#333" stroke-width=".7"/>
<rect x="773.5" y="594.7" width="125.3" height="31.3" fill="#d9b985" stroke="#333" stroke-width=".9"/>
<rect x="777.2" y="597.2" width="118.8" height="26" fill="url(#lp)" stroke="#333" stroke-width=".9"/>
<path d="M851.2,626 V665" stroke="#333" stroke-width=".9"/>
<rect x="830" y="626" width="12" height="4" fill="#6b5343" stroke="#333" stroke-width=".6"/>
<polygon points="773.5,656.5 888,656.5 896,665 773.5,665" fill="#fff" stroke="#333" stroke-width=".8"/>
<use href="#kb" transform="translate(940.2,646.8) rotate(-140) scale(1.28)"/>
<polygon points="996,622.5 1000,621.2 1030,665 1018,665 996,634" fill="#808080"/>
</g>
</svg>
<div style="left:1047px;top:96px;width:17px;height:566px;background:linear-gradient(90deg,#dcdcdc,#f8f8f8 45%,#fdfdfd 65%,#e4e4e4 90%,#9a9a9a 100%)"></div>
<div style="left:1047px;top:98px;width:15px;height:26px;border-radius:7px 7px 0 0;background:linear-gradient(90deg,#cfcfcf,#f4f4f4 50%,#fff 70%,#d8d8d8);box-shadow:inset 0 2px 2px rgba(0,0,0,.12)"></div>
<div style="left:1048px;top:130px;width:13px;height:309px;border-radius:6.5px;background:linear-gradient(90deg,#1a48c0 0%,#5a8ee0 9%,#a8c8f0 18%,#9cc4f2 40%,#6cb0f4 52%,#8ccaf8 70%,#b0e4fc 88%,#7aa8d8 100%);box-shadow:0 0 0 .5px #2a58b0"></div>
<div style="left:1047px;top:600px;width:15px;height:29px;border-radius:0 0 7px 7px;background:linear-gradient(90deg,#d4d4d4,#f6f6f6 50%,#fff 70%,#dadada);box-shadow:inset 0 -2px 2px rgba(0,0,0,.12)"></div>
<div style="left:1047px;top:629px;width:15px;height:33px;background:linear-gradient(90deg,#e4e4e4,#fbfbfb 60%,#e8e8e8)"></div>
<div style="left:1047px;top:645px;width:15px;height:1px;background:#c4c4c4"></div>
<div style="left:1050.5px;top:633.5px;width:0;height:0;border-left:4px solid transparent;border-right:4px solid transparent;border-bottom:6px solid #555"></div>
<div style="left:1050.5px;top:650.5px;width:0;height:0;border-left:4px solid transparent;border-right:4px solid transparent;border-top:6px solid #555"></div>
<div style="left:257px;top:181px;width:11px;height:496px;background:linear-gradient(90deg,#dcdcdc,#f6f6f6 50%,#fdfdfd 70%,#e0e0e0)"></div>
<div style="left:257.3px;top:186.8px;width:9.5px;height:175px;border-radius:5px;background:linear-gradient(90deg,#1a48c0 0%,#5a8ee0 9%,#a8c8f0 18%,#9cc4f2 40%,#6cb0f4 52%,#8ccaf8 70%,#b0e4fc 88%,#7aa8d8 100%);box-shadow:0 0 0 .5px #2a58b0"></div>
<div style="left:257px;top:630px;width:11px;height:21px;border-radius:0 0 6px 6px;background:linear-gradient(90deg,#d0d0d0,#f4f4f4 50%,#fff 70%,#d8d8d8);box-shadow:inset 0 -2px 2px rgba(0,0,0,.12)"></div>
<div style="left:257px;top:664px;width:11px;height:1px;background:#c4c4c4"></div>
<div style="left:259.5px;top:655.5px;width:0;height:0;border-left:3.5px solid transparent;border-right:3.5px solid transparent;border-bottom:5px solid #333"></div>
<div style="left:259.5px;top:667.5px;width:0;height:0;border-left:3.5px solid transparent;border-right:3.5px solid transparent;border-top:5px solid #333"></div>
<div style="left:268px;top:181px;width:1px;height:496px;background:#8a8a8a"></div>
<div style="left:269px;top:662px;width:778px;height:15px;background:linear-gradient(#fdfdfd,#f2f2f2 50%,#e0e0e0);border-top:1px solid #9c9c9c"></div>
<div style="left:285.5px;top:663px;width:1px;height:14px;background:#9c9c9c"></div>
<div style="left:275px;top:666px;width:1.2px;height:8px;background:#666"></div><div style="left:278.5px;top:666px;width:1.2px;height:8px;background:#666"></div>
<div style="left:308px;top:663px;width:1px;height:14px;background:#cfcfcf"></div>
<div style="left:332px;top:663px;width:1px;height:14px;background:#9c9c9c"></div>
<div style="left:293.5px;top:666px;width:0;height:0;border-top:4px solid transparent;border-bottom:4px solid transparent;border-right:6px solid #9a9a9a"></div>
<div style="left:316px;top:666px;width:0;height:0;border-top:4px solid transparent;border-bottom:4px solid transparent;border-left:6px solid #9a9a9a"></div>
<div style="left:333px;top:663px;width:92px;height:14px;background:linear-gradient(#fdfdfd,#ececec)"></div>
<div style="left:415.5px;top:664.5px;width:0;height:0;border-left:3px solid transparent;border-right:3px solid transparent;border-bottom:4.5px solid #444"></div>
<div style="left:415.5px;top:671.5px;width:0;height:0;border-left:3px solid transparent;border-right:3px solid transparent;border-top:4.5px solid #444"></div>
<div style="left:425px;top:663px;width:1px;height:14px;background:#9c9c9c"></div>
<div style="left:428px;top:663px;width:44px;height:14px;background:linear-gradient(#b4b4b4,#8e8e8e)"></div>
<div style="left:435px;top:665px;width:8px;height:10px;background:#fafafa;border:1px solid #6a6a6a"></div>
<div style="left:446px;top:665px;width:8px;height:10px;background:#fafafa;border:1px solid #6a6a6a"></div>
<div style="left:457px;top:665px;width:8px;height:10px;background:#fafafa;border:1px solid #6a6a6a"></div>
<div style="left:476px;top:663px;width:527px;height:14px;border-radius:7px;background:linear-gradient(#ffffff,#f4f4f4 50%,#dedede);box-shadow:inset 3px 0 3px rgba(0,0,0,.10), inset -3px 0 3px rgba(0,0,0,.10)"></div>
<div style="left:629px;top:663.2px;width:292px;height:12.3px;border-radius:6.2px;background:linear-gradient(180deg,#1a48c0 0%,#5a8ee0 9%,#a8c8f0 18%,#9cc4f2 40%,#6cb0f4 52%,#8ccaf8 70%,#b0e4fc 88%,#7aa8d8 100%)"></div>
<div style="left:1002.5px;top:663px;width:31.5px;height:14px;background:linear-gradient(#fdfdfd,#e6e6e6)"></div>
<div style="left:1018px;top:663px;width:1px;height:14px;background:#cfcfcf"></div>
<div style="left:1007px;top:666px;width:0;height:0;border-top:4px solid transparent;border-bottom:4px solid transparent;border-right:6px solid #555"></div>
<div style="left:1024px;top:666px;width:0;height:0;border-top:4px solid transparent;border-bottom:4px solid transparent;border-left:6px solid #555"></div>
<div style="left:1034px;top:663px;width:30px;height:14px;background:linear-gradient(#d0d0d0,#a8a8a8)"></div>
<div style="left:1035px;top:664px;width:13px;height:12px;background:#f4f8fc;border:1px dashed #3a6ac8"></div>
<div style="left:1038.5px;top:667px;width:6px;height:6px;border:1px solid #3a6ac8;background:#cfe0f8"></div>
<div style="left:1049px;top:664px;width:13px;height:12px;background:#f4f8fc;border:1px dashed #3a6ac8"></div>
<div style="left:1052px;top:665.5px;width:7px;height:9px;border:1px solid #777;background:#fff"></div>
<div class="t" style="left:337px;top:664px;font-size:10px;line-height:12px">100%</div>
<div style="left:40px;top:676.5px;width:1024px;height:18px;background:#ececec;border-top:1px solid #a4a4a4;border-bottom:1px solid #f8f8f8"></div>
<div class="t" style="left:49px;top:679px;font-size:11px;line-height:13px">Ready</div>
<div class="t" style="left:255.7px;top:679px;font-size:11px;line-height:13px;letter-spacing:.45px">W: 70.76,</div>
<div class="t" style="left:314.3px;top:679px;font-size:11px;line-height:13px;letter-spacing:.45px">H: 58.00,</div>
<div class="t" style="left:370.8px;top:679px;font-size:11px;line-height:13px;letter-spacing:.5px">Angle: 0.00 rad</div>
<div class="t" style="left:583.6px;top:679px;font-size:11px;line-height:13px;letter-spacing:.55px">M: [ 152.85, 63.05 ]</div>
<div class="t" style="left:838px;top:679px;font-size:11px;line-height:13px;letter-spacing:.55px">ID: 180840</div>
<svg style="left:0;top:0" width="1104" height="750" viewBox="0 0 1104 750">
<defs>
<linearGradient id="bl" x1="0" y1="0" x2="0" y2="1"><stop offset="0" stop-color="#c4dcf6"/><stop offset="1" stop-color="#7aa8e0"/></linearGradient>
<radialGradient id="thumb" cx=".5" cy=".35" r=".6"><stop offset="0" stop-color="#d8ecff"/><stop offset=".6" stop-color="#4a90e0"/><stop offset="1" stop-color="#2a60b8"/></radialGradient>
</defs>
<path d="M73,54 L73,65.5 L75.6,63 L77.8,67.3 L79.5,66.5 L77.4,62.3 L80.8,62.2 Z" fill="#fff" stroke="#1a2f7a" stroke-width="1.2" stroke-linejoin="round"/>
<rect x="99.5" y="55.5" width="15" height="10" fill="url(#bl)" stroke="#22479a" stroke-width="1.2"/>
<ellipse cx="136.5" cy="60.5" rx="8" ry="5.5" fill="url(#bl)" stroke="#22479a" stroke-width="1.1"/>
<rect x="161.5" y="55" width="11" height="10.5" fill="#d8e6f8" stroke="#22479a" stroke-width="1.1"/>
<path d="M164,57.8 H170 M164,59.8 H170 M164,61.8 H170 M164,63.6 H170" stroke="#22479a" stroke-width=".8"/>
<path d="M190,56 L191.5,64 Q192,65.5 194,65.5 L201,65.5" stroke="#3a8a2a" stroke-width="1.4" fill="none"/>
<rect x="187.29999999999998" y="53.400000000000006" width="4.6" height="4.6" fill="#5b8fd8" stroke="#1d4a9a" stroke-width=".8"/>
<rect x="199.0" y="62.900000000000006" width="4.6" height="4.6" fill="#5b8fd8" stroke="#1d4a9a" stroke-width=".8"/>
<path d="M220.2,55.7 L230.9,65.2" stroke="#3a8a2a" stroke-width="1.4"/>
<rect x="217.89999999999998" y="53.400000000000006" width="4.6" height="4.6" fill="#5b8fd8" stroke="#1d4a9a" stroke-width=".8"/>
<rect x="228.6" y="62.900000000000006" width="4.6" height="4.6" fill="#5b8fd8" stroke="#1d4a9a" stroke-width=".8"/>
<path d="M249.5,55.7 H254 Q257,55.7 257,58.5 Q257,61 254,61 Q251.5,61 251.5,63.2 Q251.5,65.2 255,65.2 H261" stroke="#3a8a2a" stroke-width="1.4" fill="none"/>
<rect x="247.2" y="53.400000000000006" width="4.6" height="4.6" fill="#5b8fd8" stroke="#1d4a9a" stroke-width=".8"/>
<rect x="258.7" y="62.900000000000006" width="4.6" height="4.6" fill="#5b8fd8" stroke="#1d4a9a" stroke-width=".8"/>
<path d="M270.5,63.5 H275.5 L273,67 Z" fill="#333"/>
<path d="M286.8,55.7 H291 Q293,55.7 293,58 V63 Q293,65.2 295,65.2 H299.4" stroke="#3a8a2a" stroke-width="1.3" fill="none"/>
<path d="M293,55.7 H297 M287,65.2 H292" stroke="#5cc040" stroke-width=".8"/>
<rect x="284.5" y="53.400000000000006" width="4.6" height="4.6" fill="#5b8fd8" stroke="#1d4a9a" stroke-width=".8"/>
<rect x="297.09999999999997" y="62.900000000000006" width="4.6" height="4.6" fill="#5b8fd8" stroke="#1d4a9a" stroke-width=".8"/>
<rect x="316" y="55" width="10.5" height="11" rx="1" fill="#d4d4d4" stroke="#666" stroke-width=".9"/>
<path d="M323,56.5 L329,62.5 M329,56.5 L323,62.5 M326,55.5 V63.5" stroke="#2a5ac8" stroke-width="1.1"/>
<path d="M360.5,56.2 L370.6,66.8" stroke="#3a6ab8" stroke-width="1.3"/>
<rect x="359.05" y="54.75" width="2.9" height="2.9" fill="#62c448" stroke="#3a9a2a" stroke-width=".5"/>
<rect x="369.15000000000003" y="65.35" width="2.9" height="2.9" fill="#62c448" stroke="#3a9a2a" stroke-width=".5"/>
<path d="M388.3,55.3 Q398,57 399.6,67.4" stroke="#3a6ab8" stroke-width="1.3" fill="none"/>
<rect x="386.85" y="53.849999999999994" width="2.9" height="2.9" fill="#62c448" stroke="#3a9a2a" stroke-width=".5"/>
<rect x="398.15000000000003" y="65.95" width="2.9" height="2.9" fill="#62c448" stroke="#3a9a2a" stroke-width=".5"/>
<path d="M416.5,55.3 Q428,55 427,61.5 Q426,67 420.2,67.6" stroke="#3a6ab8" stroke-width="1.3" fill="none"/>
<rect x="415.05" y="53.849999999999994" width="2.9" height="2.9" fill="#62c448" stroke="#3a9a2a" stroke-width=".5"/>
<rect x="418.75" y="66.14999999999999" width="2.9" height="2.9" fill="#62c448" stroke="#3a9a2a" stroke-width=".5"/>
<path d="M443.5,55.3 Q446,62 450,60 Q454,59 455,67" stroke="#3a6ab8" stroke-width="1.3" fill="none"/><path d="M443.5,55.3 L444,62.5 M455,67 L457.5,61.5" stroke="#3a6ab8" stroke-width=".6"/>
<rect x="442.05" y="53.849999999999994" width="2.9" height="2.9" fill="#62c448" stroke="#3a9a2a" stroke-width=".5"/>
<rect x="453.55" y="65.55" width="2.9" height="2.9" fill="#62c448" stroke="#3a9a2a" stroke-width=".5"/>
<rect x="442.55" y="61.05" width="2.9" height="2.9" fill="#62c448" stroke="#3a9a2a" stroke-width=".5"/>
<rect x="456.05" y="60.05" width="2.9" height="2.9" fill="#62c448" stroke="#3a9a2a" stroke-width=".5"/>
<path d="M471.4,55 V67 M482.5,55 V67" stroke="#3a6ab8" stroke-width="1.1"/><path d="M475,57.5 L479,61 L475,64.5 Z" fill="none" stroke="#3a6ab8" stroke-width=".9"/>
<rect x="469.95" y="53.55" width="2.9" height="2.9" fill="#62c448" stroke="#3a9a2a" stroke-width=".5"/>
<rect x="481.05" y="53.55" width="2.9" height="2.9" fill="#62c448" stroke="#3a9a2a" stroke-width=".5"/>
<rect x="469.95" y="59.55" width="2.9" height="2.9" fill="#62c448" stroke="#3a9a2a" stroke-width=".5"/>
<rect x="481.05" y="59.55" width="2.9" height="2.9" fill="#62c448" stroke="#3a9a2a" stroke-width=".5"/>
<rect x="469.95" y="65.55" width="2.9" height="2.9" fill="#62c448" stroke="#3a9a2a" stroke-width=".5"/>
<rect x="481.05" y="65.55" width="2.9" height="2.9" fill="#62c448" stroke="#3a9a2a" stroke-width=".5"/>
<path d="M497,56.5 H511 M500,56 L509,66 M510,56 L501,66" stroke="#7a8a9a" stroke-width="1.1"/><circle cx="500.5" cy="66" r="2" fill="none" stroke="#3a6ab8" stroke-width="1.1"/><circle cx="509.5" cy="66" r="2" fill="none" stroke="#3a6ab8" stroke-width="1.1"/>
<rect x="494.55" y="55.05" width="2.9" height="2.9" fill="#62c448" stroke="#3a9a2a" stroke-width=".5"/>
<rect x="510.55" y="55.05" width="2.9" height="2.9" fill="#62c448" stroke="#3a9a2a" stroke-width=".5"/>
<path d="M539,65 L545,57.5 Q553,55 553,62 Q553,67 548,67" stroke="#5a8ac8" stroke-width="1.2" fill="none"/>
<rect x="536.55" y="54.55" width="2.9" height="2.9" fill="#62c448" stroke="#3a9a2a" stroke-width=".5"/>
<rect x="553.55" y="54.55" width="2.9" height="2.9" fill="#62c448" stroke="#3a9a2a" stroke-width=".5"/>
<rect x="536.55" y="65.05" width="2.9" height="2.9" fill="#62c448" stroke="#3a9a2a" stroke-width=".5"/>
<rect x="553.55" y="65.05" width="2.9" height="2.9" fill="#62c448" stroke="#3a9a2a" stroke-width=".5"/>
<rect x="545.05" y="65.05" width="2.9" height="2.9" fill="#62c448" stroke="#3a9a2a" stroke-width=".5"/>
<rect x="545" y="55" width="3" height="3" fill="#e03030"/>
<rect x="566" y="55.5" width="11" height="9" fill="#bcd4f0" stroke="#5a8ac8" stroke-width=".9"/><circle cx="578" cy="64" r="5" fill="#bcd4f0" stroke="#5a8ac8" stroke-width=".9"/>
<rect x="564.55" y="54.05" width="2.9" height="2.9" fill="#62c448" stroke="#3a9a2a" stroke-width=".5"/>
<rect x="581.55" y="54.05" width="2.9" height="2.9" fill="#62c448" stroke="#3a9a2a" stroke-width=".5"/>
<rect x="564.55" y="65.55" width="2.9" height="2.9" fill="#62c448" stroke="#3a9a2a" stroke-width=".5"/>
<rect x="581.55" y="65.55" width="2.9" height="2.9" fill="#62c448" stroke="#3a9a2a" stroke-width=".5"/>
<rect x="595" y="56" width="9" height="8" fill="#bcd4f0" stroke="#5a8ac8" stroke-width=".9"/><circle cx="606" cy="64" r="5" fill="#bcd4f0" stroke="#5a8ac8" stroke-width=".9"/>
<rect x="592.55" y="54.05" width="2.9" height="2.9" fill="#62c448" stroke="#3a9a2a" stroke-width=".5"/>
<rect x="609.55" y="54.05" width="2.9" height="2.9" fill="#62c448" stroke="#3a9a2a" stroke-width=".5"/>
<rect x="592.55" y="65.55" width="2.9" height="2.9" fill="#62c448" stroke="#3a9a2a" stroke-width=".5"/>
<rect x="609.55" y="65.55" width="2.9" height="2.9" fill="#62c448" stroke="#3a9a2a" stroke-width=".5"/>
<rect x="600.55" y="54.55" width="2.9" height="2.9" fill="#62c448" stroke="#3a9a2a" stroke-width=".5"/>
<path d="M643.5,58.5 A6,6 0 0 1 654,57.5" stroke="#2a6ad8" stroke-width="2.2" fill="none"/><path d="M653.5,63 A6,6 0 0 1 643,64" stroke="#2a6ad8" stroke-width="2.2" fill="none"/><path d="M651.5,55.5 L656.5,59 L651,60.5 Z M645.5,66 L640.5,62.5 L646,61 Z" fill="#2a6ad8"/>
<circle cx="675" cy="59" r="4.3" fill="#dceaf8" stroke="#2a5ab8" stroke-width="1.5"/><path d="M678.3,62.3 L682.5,66.8" stroke="#333" stroke-width="2"/>
<path d="M700,62 L703,67 Q705,69 708,68 Q711,67 711,63 L711,57.5 Q710,56.5 709,57.5 L709,61 L708.5,55 Q707.5,54 706.5,55 L706.5,60.5 L705.5,54.5 Q704.5,53.5 703.5,54.5 L703.7,61 L702.5,56 Q701.5,55 700.5,56 L701.5,63 L699.5,60 Q698,59.5 698.5,61 Z" fill="#eef4fc" stroke="#1a3f9a" stroke-width=".9"/>
<circle cx="733" cy="57" r="3" fill="#8ab8ec" stroke="#2a5ab8" stroke-width=".9"/><path d="M733,60 V62.5" stroke="#2a5ab8" stroke-width="1.2"/><rect x="726" y="62.5" width="14" height="5" rx="1" fill="#dfe8f4" stroke="#1a3f9a" stroke-width="1.1"/><rect x="727" y="65.5" width="12" height="1.8" fill="#888"/>
<path d="M757,67 L766,58 M764,55.5 L768.5,60" stroke="#2a5ab8" stroke-width="2"/><path d="M756.5,67.5 L758,66" stroke="#6aa0e0" stroke-width="1.5"/>
<circle cx="819.9" cy="60" r="5.3" fill="#dfeeff" stroke="#2a5ab8" stroke-width="1.3"/><path d="M817,60 H823" stroke="#1a3f9a" stroke-width="1.6"/><path d="M823.5,64 L829,70" stroke="#111" stroke-width="1.5"/>
<rect x="838.6" y="61.5" width="91.4" height="4" rx="2" fill="#b8b8b8" stroke="#8a8a8a" stroke-width=".7"/>
<circle cx="864.4" cy="62.7" r="5.3" fill="url(#thumb)" stroke="#2a5ab8" stroke-width=".7"/>
<circle cx="942.7" cy="60" r="5.3" fill="#dfeeff" stroke="#2a5ab8" stroke-width="1.3"/><path d="M939.7,60 H945.7 M942.7,57 V63" stroke="#1a3f9a" stroke-width="1.6"/><path d="M946.3,64 L951.8,70" stroke="#111" stroke-width="1.5"/>
<path d="M47.6,83.5 V91 H51 M47.6,87 H51" stroke="#3a5fb0" stroke-width="1" fill="none"/>
<rect x="45.3" y="80" width="4.8" height="3.4" fill="#fff" stroke="#2a4f9a" stroke-width="1.1"/>
<rect x="51" y="85.3" width="4" height="3" fill="#fff" stroke="#2a4f9a" stroke-width="1"/>
<rect x="51" y="89.3" width="4" height="3" fill="#fff" stroke="#2a4f9a" stroke-width="1"/>
<path d="M52,81.7 H62 M57,86.8 H62 M57,90.8 H62" stroke="#4a70b8" stroke-width="1.6"/>
<rect x="219.5" y="81.2" width="3.6" height="2.6" fill="#fff" stroke="#2a4f9a" stroke-width=".9"/>
<rect x="219.5" y="85.2" width="3.6" height="2.6" fill="#fff" stroke="#2a4f9a" stroke-width=".9"/>
<rect x="219.5" y="89.2" width="3.6" height="2.6" fill="#fff" stroke="#2a4f9a" stroke-width=".9"/>
<rect x="225.5" y="81.2" width="3.6" height="2.6" fill="#fff" stroke="#2a4f9a" stroke-width=".9"/>
<rect x="225.5" y="85.2" width="3.6" height="2.6" fill="#fff" stroke="#2a4f9a" stroke-width=".9"/>
<rect x="225.5" y="89.2" width="3.6" height="2.6" fill="#fff" stroke="#2a4f9a" stroke-width=".9"/>
<circle cx="252.8" cy="84.6" r="3.6" fill="none" stroke="#2a4f9a" stroke-width="2"/><path d="M255.5,87.3 L258.8,90.6" stroke="#2a4f9a" stroke-width="2.4" stroke-linecap="round"/>
<circle cx="67.5" cy="108.5" r="3.3" fill="none" stroke="#555" stroke-width="1.5"/><path d="M70,111 L73,114" stroke="#555" stroke-width="1.8" stroke-linecap="round"/>
</svg>
<svg style="left:1050px;top:680px" width="14" height="14"><path d="M3,13 L13,3 M7,13 L13,7 M11,13 L13,11" stroke="#8a8a8a" stroke-width="1"/><path d="M4,13 L13,4 M8,13 L13,8" stroke="#fff" stroke-width=".6"/></svg>
</body></html>
